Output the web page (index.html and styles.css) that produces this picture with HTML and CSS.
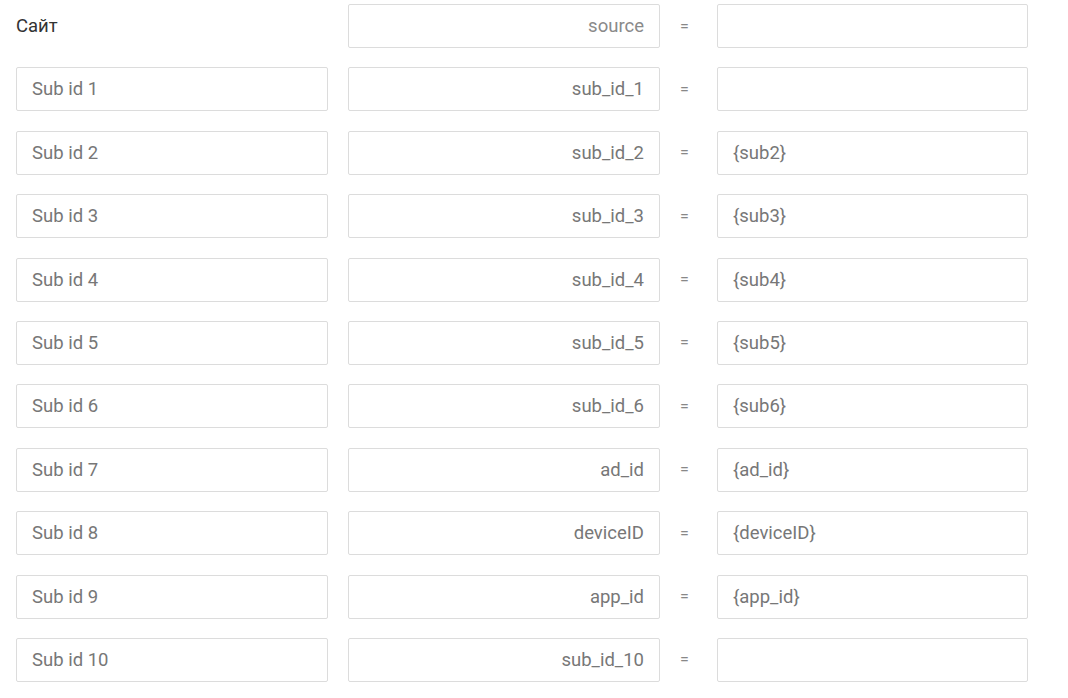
FILE: index.html
```html
<!DOCTYPE html>
<html lang="ru">
<head>
<meta charset="utf-8">
<title>Параметры</title>
<link rel="stylesheet" href="styles.css">
</head>
<body>
<div class="grid">
  <div class="label">Сайт</div>
  <div class="field right muted">source</div>
  <div class="eq">=</div>
  <div class="field"></div>

  <div class="field">Sub id 1</div>
  <div class="field right">sub_id_1</div>
  <div class="eq">=</div>
  <div class="field"></div>

  <div class="field">Sub id 2</div>
  <div class="field right">sub_id_2</div>
  <div class="eq">=</div>
  <div class="field">{sub2}</div>

  <div class="field">Sub id 3</div>
  <div class="field right">sub_id_3</div>
  <div class="eq">=</div>
  <div class="field">{sub3}</div>

  <div class="field">Sub id 4</div>
  <div class="field right">sub_id_4</div>
  <div class="eq">=</div>
  <div class="field">{sub4}</div>

  <div class="field">Sub id 5</div>
  <div class="field right">sub_id_5</div>
  <div class="eq">=</div>
  <div class="field">{sub5}</div>

  <div class="field">Sub id 6</div>
  <div class="field right">sub_id_6</div>
  <div class="eq">=</div>
  <div class="field">{sub6}</div>

  <div class="field">Sub id 7</div>
  <div class="field right">ad_id</div>
  <div class="eq">=</div>
  <div class="field">{ad_id}</div>

  <div class="field">Sub id 8</div>
  <div class="field right">deviceID</div>
  <div class="eq">=</div>
  <div class="field">{deviceID}</div>

  <div class="field">Sub id 9</div>
  <div class="field right">app_id</div>
  <div class="eq">=</div>
  <div class="field">{app_id}</div>

  <div class="field">Sub id 10</div>
  <div class="field right">sub_id_10</div>
  <div class="eq">=</div>
  <div class="field"></div>
</div>
</body>
</html>
```
FILE: styles.css
```css
html, body {
  margin: 0;
  padding: 0;
  background: #ffffff;
}
body {
  padding: 4px 0 0 16px;
  font-family: Roboto, "Liberation Sans", Arial, sans-serif;
  font-size: 18.5px;
}
.grid {
  display: grid;
  grid-template-columns: 312px 20px 312px 57px 311px;
  grid-auto-rows: 44px;
  row-gap: 19.4px;
}
.grid > :nth-child(4n+1) { grid-column: 1; }
.grid > :nth-child(4n+2) { grid-column: 3; }
.grid > :nth-child(4n+3) { grid-column: 4; }
.grid > :nth-child(4n+4) { grid-column: 5; }
.label {
  display: flex;
  align-items: center;
  color: #333333;
}
.field {
  box-sizing: border-box;
  border: 1px solid #dcdcdc;
  border-radius: 2px;
  display: flex;
  align-items: center;
  padding: 0 15px;
  color: #777777;
}
.field.right {
  justify-content: flex-end;
}
.field.muted {
  color: #8a8a8a;
}
.eq {
  display: flex;
  align-items: center;
  padding-left: 20px;
  color: #888888;
  font-size: 16px;
}
```
